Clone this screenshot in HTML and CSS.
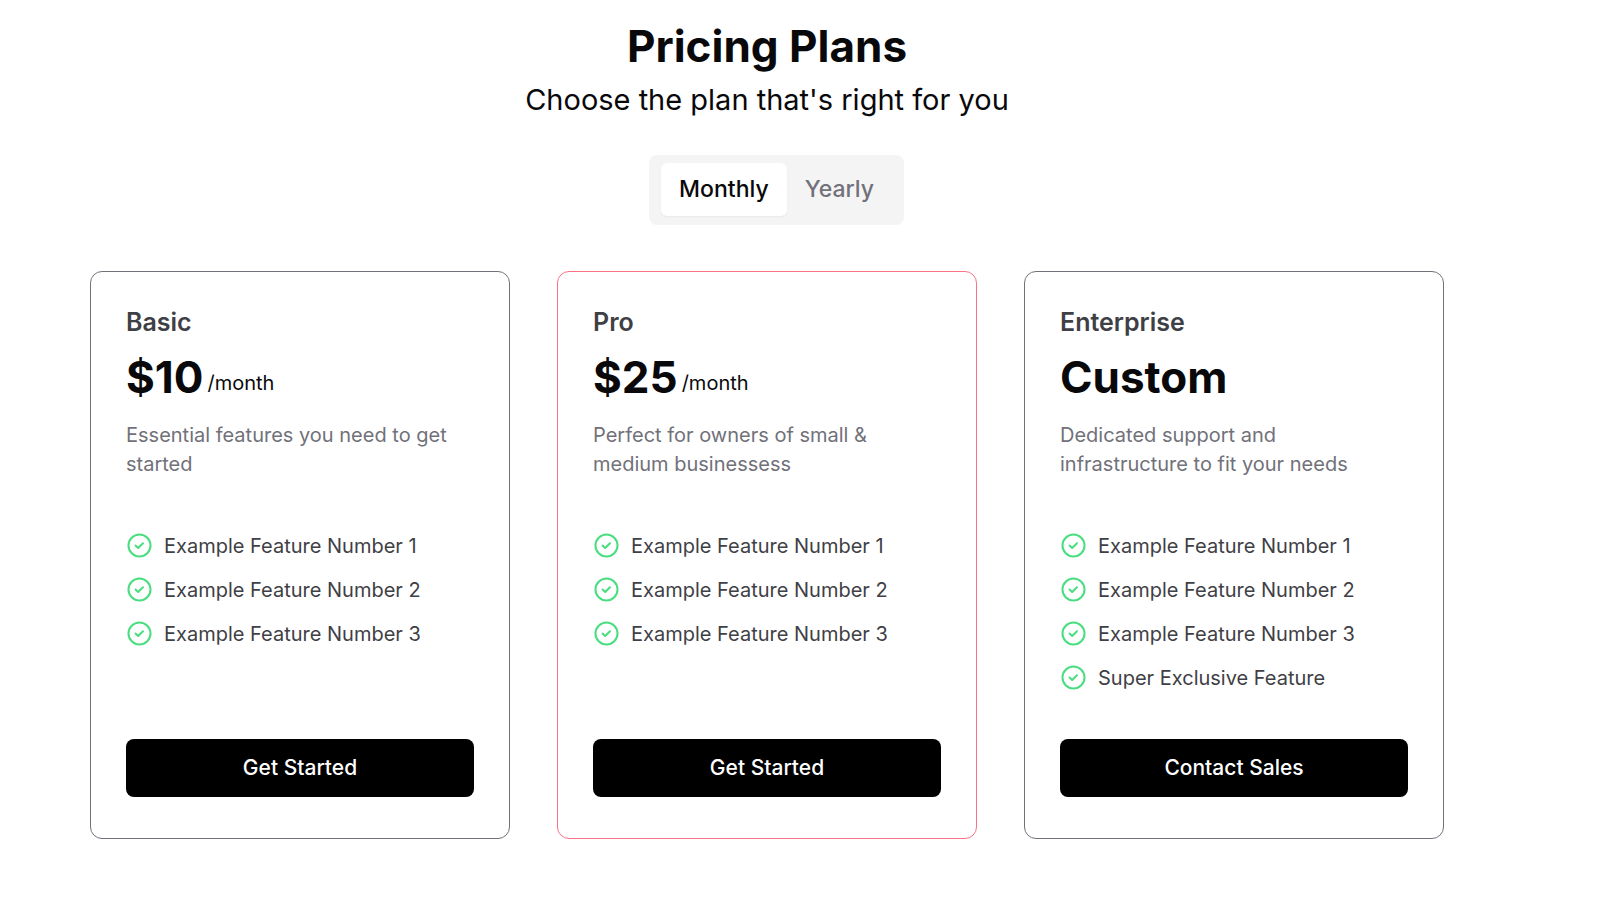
FILE: index.html
```html
<!DOCTYPE html>
<html lang="en">
<head>
    <meta charset="UTF-8">
    <meta name="viewport" content="width=device-width, initial-scale=1.0">
    <title>Pricing Plans</title>
    <link rel="stylesheet" href="styles.css">
</head>
<body>
    <!-- check icon shared by every feature -->
    <svg class="sprite" aria-hidden="true">
        <symbol id="check" viewBox="0 0 24 24">
            <circle cx="12" cy="12" r="9.8"></circle>
            <path d="m8.5 12 2.3 2.2 4.3-4.2"></path>
        </symbol>
    </svg>

    <main class="container">
        <header class="heading">
            <h1>Pricing Plans</h1>
            <p>Choose the plan that's right for you</p>
        </header>

        <div class="toggle" role="tablist" aria-label="Billing period">
            <button class="tab active" type="button" role="tab" aria-selected="true" data-period="monthly">Monthly</button>
            <button class="tab" type="button" role="tab" aria-selected="false" data-period="yearly">Yearly</button>
        </div>

        <section class="plans">
            <article class="card">
                <h2>Basic</h2>
                <div class="price">
                    <strong data-monthly="$10" data-yearly="$100">$10</strong>
                    <span data-monthly="/month" data-yearly="/year">/month</span>
                </div>
                <p class="description">Essential features you need to get started</p>
                <ul class="features">
                    <li><svg class="icon"><use href="#check"></use></svg>Example Feature Number 1</li>
                    <li><svg class="icon"><use href="#check"></use></svg>Example Feature Number 2</li>
                    <li><svg class="icon"><use href="#check"></use></svg>Example Feature Number 3</li>
                </ul>
                <button class="action" type="button">Get Started</button>
            </article>

            <article class="card popular">
                <h2>Pro</h2>
                <div class="price">
                    <strong data-monthly="$25" data-yearly="$250">$25</strong>
                    <span data-monthly="/month" data-yearly="/year">/month</span>
                </div>
                <p class="description">Perfect for owners of small &amp; medium businessess</p>
                <ul class="features">
                    <li><svg class="icon"><use href="#check"></use></svg>Example Feature Number 1</li>
                    <li><svg class="icon"><use href="#check"></use></svg>Example Feature Number 2</li>
                    <li><svg class="icon"><use href="#check"></use></svg>Example Feature Number 3</li>
                </ul>
                <button class="action" type="button">Get Started</button>
            </article>

            <article class="card">
                <h2>Enterprise</h2>
                <div class="price">
                    <strong>Custom</strong>
                </div>
                <p class="description">Dedicated support and infrastructure to fit your needs</p>
                <ul class="features">
                    <li><svg class="icon"><use href="#check"></use></svg>Example Feature Number 1</li>
                    <li><svg class="icon"><use href="#check"></use></svg>Example Feature Number 2</li>
                    <li><svg class="icon"><use href="#check"></use></svg>Example Feature Number 3</li>
                    <li><svg class="icon"><use href="#check"></use></svg>Super Exclusive Feature</li>
                </ul>
                <button class="action" type="button">Contact Sales</button>
            </article>
        </section>
    </main>

    <script>
        const tabs = document.querySelectorAll('.tab');
        const prices = document.querySelectorAll('.price [data-monthly]');

        // switch the prices between monthly and yearly
        tabs.forEach((tab) => {
            tab.addEventListener('click', () => {
                tabs.forEach((t) => {
                    t.classList.toggle('active', t === tab);
                    t.setAttribute('aria-selected', t === tab);
                });
                prices.forEach((el) => {
                    el.textContent = el.dataset[tab.dataset.period];
                });
            });
        });
    </script>
</body>
</html>
```
FILE: styles.css
```css
/* variables */
:root {
    --text: #09090b;
    --muted: #71717a;
    --dark: #3f3f46;
    --green: #4ade80;
}

* {
    box-sizing: border-box;
}

body {
    margin: 0;
    background-color: white;
    color: var(--text);
    font-family: Inter, sans-serif;
}

h1, h2, p, ul {
    margin: 0;
    padding: 0;
}

button {
    border: none;
    font-family: inherit;
    cursor: pointer;
}

.sprite {
    display: none;
}

.container {
    display: flex;
    flex-direction: column;
    align-items: center;
    padding: 19px 156px 48px 90px;
}

/* title */
.heading {
    text-align: center;
}

.heading h1 {
    font-size: 44px;
    line-height: 54px;
    font-weight: 700;
}

.heading p {
    padding-top: 5px;
    font-size: 29px;
    line-height: 44px;
}

/* monthly / yearly */
.toggle {
    display: flex;
    margin: 33px 0 46px 19px;
    padding: 8px 12px 9px;
    border-radius: 8px;
    background-color: #f4f4f5;
}

.tab {
    padding: 8px 18px;
    border-radius: 6px;
    background-color: transparent;
    color: var(--muted);
    font-size: 23px;
    line-height: 37px;
    font-weight: 500;
}

.tab.active {
    background-color: white;
    color: var(--text);
    box-shadow: 0 1px 2px rgba(0, 0, 0, 0.05);
}

/* cards */
.plans {
    display: grid;
    grid-template-columns: repeat(3, 1fr);
    gap: 47px;
    width: 100%;
}

.card {
    display: flex;
    flex-direction: column;
    padding: 32px 35px 41px;
    border: 1px solid var(--muted);
    border-radius: 12px;
}

.card.popular {
    border-color: #fb7185;
}

.card h2 {
    color: var(--dark);
    font-size: 25px;
    line-height: 36px;
    font-weight: 600;
}

.price {
    display: flex;
    align-items: flex-end;
    gap: 4px;
    padding: 10px 0 17px;
}

.price strong {
    font-size: 44px;
    line-height: 54px;
}

.price span {
    font-size: 20px;
    line-height: 42px;
}

.description {
    min-height: 58px;
    color: var(--muted);
    font-size: 20px;
    line-height: 29px;
}

.features {
    display: flex;
    flex-direction: column;
    flex: 1;
    gap: 15px;
    padding: 53px 0 46px;
    list-style: none;
}

.features li {
    display: flex;
    align-items: flex-start;
    gap: 11px;
    color: var(--dark);
    font-size: 20px;
    line-height: 29px;
}

.icon {
    flex: none;
    width: 27px;
    height: 27px;
    fill: none;
    stroke: var(--green);
    stroke-width: 1.8;
    stroke-linecap: round;
    stroke-linejoin: round;
}

.action {
    padding: 14px;
    border-radius: 8px;
    background-color: black;
    color: white;
    font-size: 21px;
    line-height: 30px;
    font-weight: 500;
}

@media (max-width: 1100px) {
    .container {
        padding: 20px 24px 48px;
    }

    .toggle {
        margin-left: 0;
    }

    .plans {
        grid-template-columns: 1fr;
        gap: 24px;
    }
}
```
